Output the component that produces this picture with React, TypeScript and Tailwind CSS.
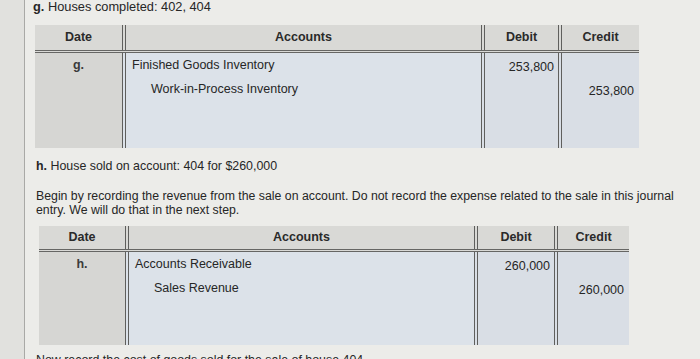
import React from "react";

type Entry = {
  date: string;
  debitAcct: string;
  creditAcct: string;
  amount: string;
};

function Journal({
  entry,
  widths,
  headerH,
  bodyH,
  className,
}: {
  entry: Entry;
  widths: [number, number, number, number];
  headerH: number;
  bodyH: number;
  className?: string;
}) {
  const [wd, wa, wdb, wc] = widths;
  const div = "border-l-[4px] border-double border-[#5f5f5d]";
  return (
    <div className={className} style={{ width: wd + wa + wdb + wc }}>
      <div
        className="flex bg-[#d9d9d6] border-b-[3px] border-double border-[#666664] text-[12.5px] font-bold text-[#2a2a2a]"
        style={{ height: headerH + 3 }}
      >
        <div className="flex items-center justify-center" style={{ width: wd }}>
          Date
        </div>
        <div className={`flex items-center justify-center ${div}`} style={{ width: wa }}>
          Accounts
        </div>
        <div className={`flex items-center justify-center ${div}`} style={{ width: wdb }}>
          Debit
        </div>
        <div className={`flex items-center justify-center ${div}`} style={{ width: wc }}>
          Credit
        </div>
      </div>
      <div className="flex text-[12.5px] text-[#262626]" style={{ height: bodyH }}>
        <div className="bg-[#d6d6d3] pt-[2px] text-center font-bold text-[#3a3a3a]" style={{ width: wd }}>
          <div className="h-[20px] leading-[20px]">{entry.date}</div>
        </div>
        <div className={`bg-[#dce2e9] pt-[2px] pl-[6px] ${div}`} style={{ width: wa }}>
          <div className="h-[20px] leading-[20px]">{entry.debitAcct}</div>
          <div className="mt-[4px] h-[20px] leading-[20px] pl-[19px]">{entry.creditAcct}</div>
        </div>
        <div className={`bg-[#d9dee5] pt-[4px] pr-[4px] text-right ${div}`} style={{ width: wdb }}>
          <div className="h-[20px] leading-[20px]">{entry.amount}</div>
        </div>
        <div className={`bg-[#d9dee5] pt-[4px] pr-[5px] text-right ${div}`} style={{ width: wc }}>
          <div className="h-[20px] leading-[20px]"></div>
          <div className="mt-[4px] h-[20px] leading-[20px]">{entry.amount}</div>
        </div>
      </div>
    </div>
  );
}

export default function App() {
  return (
    <div
      className="flex h-[359px] w-[700px] overflow-hidden bg-[#ecece9] text-[#262626]"
      style={{ fontFamily: '"Liberation Sans", Arial, sans-serif' }}
    >
      <div className="w-[25px] shrink-0 bg-[#e1e1de] border-r border-[#a9a9a6]" />
      <div className="flex-1 pl-[8px]">
        <div className="mt-[-2px] h-[18px] text-[12.8px] leading-[18px]">
          <span className="font-bold">g.</span> Houses completed: 402, 404
        </div>
        <Journal
          className="ml-[2px] mt-[9px]"
          entry={{
            date: "g.",
            debitAcct: "Finished Goods Inventory",
            creditAcct: "Work-in-Process Inventory",
            amount: "253,800",
          }}
          widths={[87, 359, 77, 81]}
          headerH={25}
          bodyH={95}
        />
        <div className="mt-[10px] ml-[3px] text-[12.4px] leading-[16px]">
          <span className="font-bold">h.</span> House sold on account: 404 for $260,000
        </div>
        <p className="mt-[15px] ml-[3px] w-[650px] text-[12.3px] leading-[14px]">
          Begin by recording the revenue from the sale on account. Do not record the expense related to the sale in this journal
          entry. We will do that in the next step.
        </p>
        <Journal
          className="ml-[6px] mt-[9px]"
          entry={{
            date: "h.",
            debitAcct: "Accounts Receivable",
            creditAcct: "Sales Revenue",
            amount: "260,000",
          }}
          widths={[86, 349, 80, 75]}
          headerH={23}
          bodyH={93}
        />
        <div className="mt-[7px] ml-[3px] text-[12.4px] leading-[16px]">
          Now record the cost of goods sold for the sale of house 404.
        </div>
      </div>
    </div>
  );
}
